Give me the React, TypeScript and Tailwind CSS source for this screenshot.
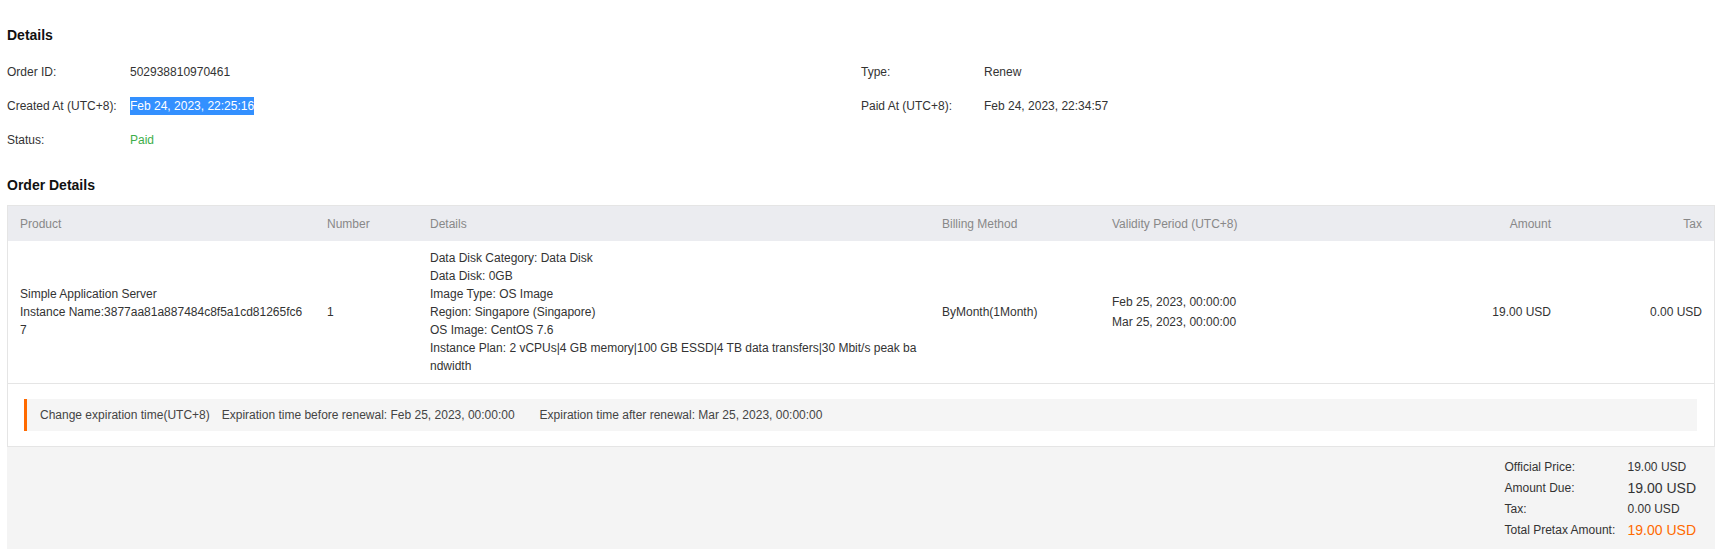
type InfoItem = {
    label: string;
    value: string;
    kind?: "selected" | "paid";
};

const infoRows: InfoItem[][] = [
    [
        { label: "Order ID:", value: "502938810970461" },
        { label: "Type:", value: "Renew" },
    ],
    [
        { label: "Created At (UTC+8):", value: "Feb 24, 2023, 22:25:16", kind: "selected" },
        { label: "Paid At (UTC+8):", value: "Feb 24, 2023, 22:34:57" },
    ],
    [{ label: "Status:", value: "Paid", kind: "paid" }],
];

const detailLines = [
    "Data Disk Category: Data Disk",
    "Data Disk: 0GB",
    "Image Type: OS Image",
    "Region: Singapore (Singapore)",
    "OS Image: CentOS 7.6",
    "Instance Plan: 2 vCPUs|4 GB memory|100 GB ESSD|4 TB data transfers|30 Mbit/s peak bandwidth",
];

const cols = "grid grid-cols-[307px_103px_512px_170px_313px_150px_151px]";

const Info = ({ item }: { item: InfoItem }) => {
    return (
        <div className="flex leading-[18px]">
            <div className="w-[123px] shrink-0">{item.label}</div>
            {item.kind === "selected" ? (
                <span className="bg-[#3390ff] text-white">{item.value}</span>
            ) : item.kind === "paid" ? (
                <span className="text-[#3dae4a]">{item.value}</span>
            ) : (
                <span>{item.value}</span>
            )}
        </div>
    );
};

const App = () => {
    return (
        <div
            className="min-h-[554px] bg-white px-[7px] text-[12px] text-[#333]"
            style={{ fontFamily: '"Liberation Sans", Arial, sans-serif' }}
        >
            <h2 className="pt-[25px] text-[14px] font-bold leading-[20px] text-[#111]">Details</h2>

            <div className="mt-[18px] flex flex-col gap-[16px] w-[1708px]">
                {infoRows.map((row, i) => (
                    <div key={i} className="grid grid-cols-[854px_854px]">
                        {row.map((item) => (
                            <Info key={item.label} item={item} />
                        ))}
                    </div>
                ))}
            </div>

            <h2 className="mt-[26px] text-[14px] font-bold leading-[20px] text-[#111]">Order Details</h2>

            <div className="mt-[10px] w-[1708px] border border-[#e5e5e5]">
                {/* table head */}
                <div className={`${cols} h-[35px] items-center bg-[#ebecf0] text-[#888]`}>
                    <div className="px-[12px]">Product</div>
                    <div className="px-[12px]">Number</div>
                    <div className="px-[12px]">Details</div>
                    <div className="px-[12px]">Billing Method</div>
                    <div className="px-[12px]">Validity Period (UTC+8)</div>
                    <div className="px-[12px] text-right">Amount</div>
                    <div className="px-[12px] text-right">Tax</div>
                </div>

                {/* table body */}
                <div className={`${cols} items-center border-b border-[#e5e5e5] py-[8px]`}>
                    <div className="px-[12px] leading-[18px] break-all">
                        <div>Simple Application Server</div>
                        <div>Instance Name:3877aa81a887484c8f5a1cd81265fc67</div>
                    </div>
                    <div className="px-[12px]">1</div>
                    <div className="px-[12px] leading-[18px] break-all">
                        {detailLines.map((l) => (
                            <div key={l}>{l}</div>
                        ))}
                    </div>
                    <div className="px-[12px]">ByMonth(1Month)</div>
                    <div className="px-[12px] leading-[20px]">
                        <div>Feb 25, 2023, 00:00:00</div>
                        <div>Mar 25, 2023, 00:00:00</div>
                    </div>
                    <div className="px-[12px] text-right">19.00 USD</div>
                    <div className="px-[12px] text-right">0.00 USD</div>
                </div>

                <div className="pl-[16px] pr-[17px] py-[15px]">
                    <div className="flex h-[32px] items-center border-l-[3px] border-[#ff6a00] bg-[#f5f5f5] pl-[13px] text-[#444]">
                        <span className="mr-[12px]">Change expiration time(UTC+8)</span>
                        <span className="mr-[25px]">Expiration time before renewal: Feb 25, 2023, 00:00:00</span>
                        <span>Expiration time after renewal: Mar 25, 2023, 00:00:00</span>
                    </div>
                </div>
            </div>

            {/* summary */}
            <div className="flex w-[1708px] justify-end bg-[#f4f4f4] pt-[10px] pb-[8px] pr-[19px]">
                <div className="grid grid-cols-[123px_auto]">
                    <div className="leading-[20px]">Official Price:</div>
                    <div className="leading-[20px]">19.00 USD</div>
                    <div className="leading-[22px]">Amount Due:</div>
                    <div className="text-[14px] leading-[22px]">19.00 USD</div>
                    <div className="leading-[20px]">Tax:</div>
                    <div className="leading-[20px]">0.00 USD</div>
                    <div className="leading-[22px]">Total Pretax Amount:</div>
                    <div className="text-[14px] leading-[22px] text-[#ff6a00]">19.00 USD</div>
                </div>
            </div>
        </div>
    );
};

export default App;
